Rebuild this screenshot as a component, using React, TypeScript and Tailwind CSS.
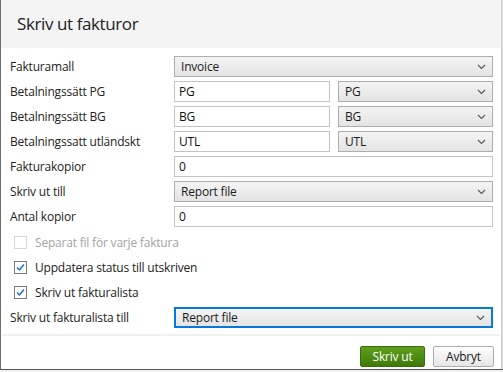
import React from 'react'

const font = { fontFamily: '"Open Sans", "Noto Sans", sans-serif' }

function Chevron() {
  return (
    <svg width="9" height="6" viewBox="0 0 9 6" className="shrink-0">
      <polyline points="1,1 4.5,4.5 8,1" fill="none" stroke="#555" strokeWidth="1.1" />
    </svg>
  )
}

function Select({ value, focused = false, className = '' }: { value: string; focused?: boolean; className?: string }) {
  return (
    <div
      className={`h-[21px] flex items-center justify-between pl-[6px] pr-[6px] bg-gradient-to-b from-[#f4f4f4] to-[#e4e4e4] ${
        focused ? 'border-2 border-[#0a78d7]' : 'border border-[#adadad]'
      } ${className}`}
    >
      <span className="text-[12px] text-[#1b1b1b] leading-none tracking-[-0.2px]">{value}</span>
      <Chevron />
    </div>
  )
}

function Input({ value, className = '' }: { value: string; className?: string }) {
  return (
    <div className={`h-[21px] flex items-center pl-[4px] bg-white border border-[#c3c3c3] ${className}`}>
      <span className="text-[12px] text-[#111] leading-none tracking-[-0.2px]">{value}</span>
    </div>
  )
}

function Row({ label, children }: { label: string; children: React.ReactNode }) {
  return (
    <div className="grid grid-cols-[164px_319px] items-center">
      <span className="text-[12px] text-[#222] leading-none tracking-[-0.2px]">{label}</span>
      {children}
    </div>
  )
}

function Check({ label, checked, disabled = false }: { label: string; checked: boolean; disabled?: boolean }) {
  return (
    <div className="h-[25px] flex items-center pl-[4px]">
      <div
        className={`w-[13px] h-[13px] border bg-white flex items-center justify-center ${
          disabled ? 'border-[#d6d6d6]' : 'border-[#7a7a7a]'
        }`}
      >
        {checked && (
          <svg width="11" height="11" viewBox="0 0 11 11">
            <polyline points="2,5.5 4.5,8 9,2.5" fill="none" stroke="#1f70c8" strokeWidth="1.5" />
          </svg>
        )}
      </div>
      <span
        className={`ml-[8px] text-[12px] leading-none tracking-[-0.2px] ${disabled ? 'text-[#a3a3a3]' : 'text-[#222]'}`}
      >
        {label}
      </span>
    </div>
  )
}

export default function App() {
  return (
    <div className="w-[503px] h-[372px] bg-[#d9d9d9] overflow-hidden flex flex-col" style={font}>
      <div className="w-[502px] h-[369px] bg-white border-l border-[#6e6e6e] border-r border-r-[#cfcfcf] flex flex-col">
        <div className="h-[48px] bg-[#f4f4f4] flex items-center pl-[16px] shrink-0">
          <span className="text-[17px] text-[#222] tracking-[-0.4px]">Skriv ut fakturor</span>
        </div>

        <div className="pl-[9px] pt-[8px] flex flex-col">
          <div className="flex flex-col gap-[4px]">
            <Row label="Fakturamall">
              <Select value="Invoice" />
            </Row>
            <Row label="Betalningssätt PG">
              <div className="grid grid-cols-[156px_155px] gap-[8px]">
                <Input value="PG" />
                <Select value="PG" />
              </div>
            </Row>
            <Row label="Betalningssätt BG">
              <div className="grid grid-cols-[156px_155px] gap-[8px]">
                <Input value="BG" />
                <Select value="BG" />
              </div>
            </Row>
            <Row label="Betalningssatt utländskt">
              <div className="grid grid-cols-[156px_155px] gap-[8px]">
                <Input value="UTL" />
                <Select value="UTL" />
              </div>
            </Row>
            <Row label="Fakturakopior">
              <Input value="0" />
            </Row>
            <Row label="Skriv ut till">
              <Select value="Report file" />
            </Row>
            <Row label="Antal kopior">
              <Input value="0" />
            </Row>
          </div>

          <div className="mt-[3px] flex flex-col">
            <Check label="Separat fil för varje faktura" checked={false} disabled />
            <Check label="Uppdatera status till utskriven" checked />
            <Check label="Skriv ut fakturalista" checked />
          </div>

          <div className="mt-[2px]">
            <Row label="Skriv ut fakturalista till">
              <Select value="Report file" focused />
            </Row>
          </div>
        </div>

        <div className="mt-[6px] mx-[1px] h-[2px] bg-[#f0f0f0]" />

        <div className="flex justify-end gap-[8px] pr-[7px] pt-[10px]">
          <button className="w-[65px] h-[21px] flex items-center justify-center border border-[#3a6c0c] bg-gradient-to-b from-[#5e9e1c] to-[#3f7a07] rounded-[2px] text-[12px] text-white leading-none tracking-[-0.2px]">
            Skriv ut
          </button>
          <button className="w-[61px] h-[21px] flex items-center justify-center border border-[#adadad] bg-gradient-to-b from-[#fdfdfd] to-[#e6e6e6] rounded-[2px] text-[12px] text-[#222] leading-none tracking-[-0.2px]">
            Avbryt
          </button>
        </div>
      </div>
      <div className="h-[1px] bg-[#555]" />
      <div className="flex-1 bg-[#f2f2f2]" />
    </div>
  )
}
